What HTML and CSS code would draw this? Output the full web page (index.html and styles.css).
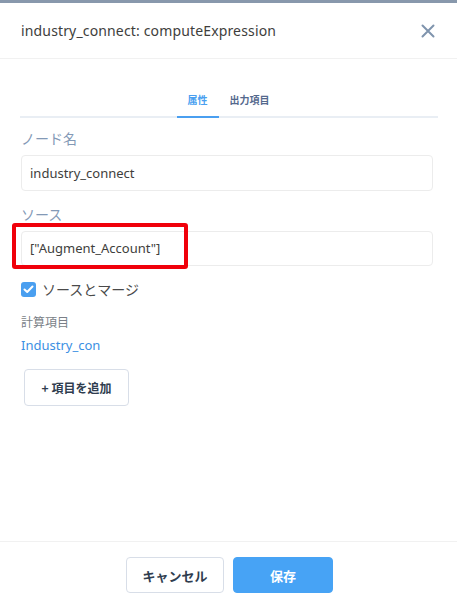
FILE: index.html
```html
<!DOCTYPE html>
<html lang="ja">
<head>
<meta charset="utf-8">
<title>industry_connect: computeExpression</title>
<link rel="stylesheet" href="styles.css">
</head>
<body>
<div class="topbar"></div>
<div class="modal">
  <header class="header">
    <h1 class="title">industry_connect: computeExpression</h1>
    <button class="close" aria-label="閉じる">
      <svg width="14" height="14" viewBox="0 0 14 14"><path d="M1.5 1.5 L12.5 12.5 M12.5 1.5 L1.5 12.5" stroke="#7f94ad" stroke-width="2" stroke-linecap="round"/></svg>
    </button>
  </header>
  <main class="content">
    <nav class="tabs">
      <span class="tab active">属性</span>
      <span class="tab">出力項目</span>
    </nav>
    <div class="field first">
      <label class="label">ノード名</label>
      <div class="input">industry_connect</div>
    </div>
    <div class="field">
      <label class="label">ソース</label>
      <div class="input-wrap">
        <div class="input">["Augment_Account"]</div>
        <div class="highlight"></div>
      </div>
    </div>
    <div class="check-row">
      <span class="checkbox">
        <svg width="11" height="9" viewBox="0 0 11 9"><path d="M1.5 4.5 L4.2 7 L9.5 1.5" fill="none" stroke="#fff" stroke-width="2" stroke-linecap="round" stroke-linejoin="round"/></svg>
      </span>
      <span class="check-label">ソースとマージ</span>
    </div>
    <div class="section-label">計算項目</div>
    <a class="link">Industry_con</a>
    <div class="add-row">
      <button class="btn add">+ 項目を追加</button>
    </div>
  </main>
  <footer class="footer">
    <button class="btn cancel">キャンセル</button>
    <button class="btn save">保存</button>
  </footer>
</div>
</body>
</html>
```

FILE: styles.css
```css
* { box-sizing: border-box; }
html, body { margin: 0; padding: 0; }
body {
  width: 457px;
  height: 603px;
  background: #fff;
  font-family: "Noto Sans", "Noto Sans CJK JP", sans-serif;
  color: #3e3e3c;
  display: flex;
  flex-direction: column;
  overflow: hidden;
}
.topbar {
  height: 3px;
  background: #8898ac;
  flex: none;
}
.modal {
  flex: 1;
  display: flex;
  flex-direction: column;
}
.header {
  height: 56px;
  display: flex;
  align-items: center;
  justify-content: space-between;
  padding: 0 22px 0 21px;
  border-bottom: 1px solid #f1f1f1;
  flex: none;
}
.title {
  margin: 0;
  font-size: 14px;
  font-weight: 400;
  color: #3e3e3c;
  letter-spacing: 0.15px;
}
.close {
  border: 0;
  background: none;
  padding: 0;
  width: 14px;
  height: 14px;
  display: flex;
  margin-top: 1px;
}
.content {
  flex: 1;
  padding: 0 24px 0 21px;
}
.tabs {
  margin: 25px -5px 0 -1px;
  display: flex;
  justify-content: center;
  border-bottom: 2px solid #e9eef4;
  padding-right: 1px;
}
.tab {
  font-family: "Noto Sans CJK JP", sans-serif;
  font-size: 10px;
  font-weight: 700;
  color: #54698d;
  height: 34px;
  line-height: 32px;
  padding: 0 11px;
  margin-bottom: -2px;
  border-bottom: 2px solid transparent;
}
.tab.active {
  color: #4a9ff0;
  border-bottom-color: #4a9ff0;
}
.field { margin-top: 14px; }
.field.first { margin-top: 11px; }
.label {
  display: block;
  font-family: "Noto Sans CJK JP", sans-serif;
  font-size: 14px;
  line-height: 18px;
  color: #8399b6;
  margin-bottom: 8px;
}
.input {
  height: 36px;
  border: 1px solid #ececec;
  border-radius: 4px;
  padding: 0 8px;
  font-size: 13px;
  line-height: 34px;
  color: #3e3e3c;
}
.input-wrap { position: relative; }
.input-wrap .input { height: 35px; line-height: 33px; }
.highlight {
  position: absolute;
  left: -9px;
  top: -8px;
  width: 176px;
  height: 46px;
  border: 4px solid #f0000a;
  border-radius: 3px;
  pointer-events: none;
}
.check-row {
  display: flex;
  align-items: center;
  gap: 6px;
  margin-top: 14px;
}
.checkbox {
  width: 15px;
  height: 15px;
  border-radius: 3px;
  background: #4a9ff0;
  display: flex;
  align-items: center;
  justify-content: center;
}
.check-label {
  font-family: "Noto Sans CJK JP", sans-serif;
  font-size: 14px;
  line-height: 18px;
  color: #4a4a4a;
}
.section-label {
  font-family: "Noto Sans CJK JP", sans-serif;
  font-size: 12px;
  line-height: 16px;
  color: #7a7f87;
  margin-top: 16px;
}
.link {
  display: block;
  font-size: 13px;
  line-height: 18px;
  color: #3b8fe3;
  margin-top: 6px;
}
.add-row { margin-top: 15px; padding-left: 3px; }
.btn {
  font-family: "Noto Sans CJK JP", sans-serif;
  font-weight: 700;
  border-radius: 4px;
  cursor: pointer;
}
.add {
  width: 105px;
  height: 37px;
  background: #fff;
  border: 1px solid #d8dee8;
  color: #2f3d4f;
  font-size: 12px;
  padding: 0;
}
.footer {
  height: 62px;
  flex: none;
  border-top: 1px solid #f1f1f1;
  display: flex;
  justify-content: center;
  align-items: flex-start;
  gap: 9px;
  padding-top: 15px;
  padding-left: 2px;
}
.cancel {
  width: 98px;
  height: 36px;
  background: #fff;
  border: 1px solid #d8dee8;
  color: #2f3d4f;
  font-size: 13px;
}
.save {
  width: 100px;
  height: 36px;
  background: #47a3f5;
  border: 1px solid #47a3f5;
  color: #fff;
  font-size: 13px;
}
```
